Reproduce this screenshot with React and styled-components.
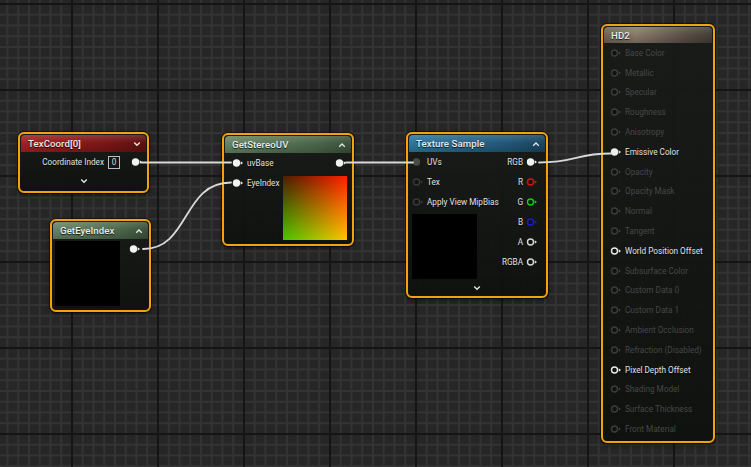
import React from 'react';
import styled, { createGlobalStyle, css } from 'styled-components';

const GlobalStyle = createGlobalStyle`
  html, body {
    margin: 0;
    padding: 0;
    background: #262626;
    font-family: Roboto, "Liberation Sans", sans-serif;
  }
`;

const Canvas = styled.div`
  position: relative;
  width: 751px;
  height: 467px;
  overflow: hidden;
  background-color: #262626;
  background-image:
    linear-gradient(to right, #151515 2px, transparent 2px),
    linear-gradient(to bottom, #151515 2px, transparent 2px),
    linear-gradient(to right, #333333 2px, transparent 2px),
    linear-gradient(to bottom, #333333 2px, transparent 2px);
  background-size: 86px 86px, 86px 86px, 10.75px 10.75px, 10.75px 10.75px;
  background-position: 71px 0, 0 3px, 6.5px 0, 0 3px;
`;

const Wires = styled.svg`
  position: absolute;
  left: 0;
  top: 0;
  width: 751px;
  height: 467px;
  pointer-events: none;
  z-index: 2;
`;

const Node = styled.div`
  position: absolute;
  left: ${p => p.$x}px;
  top: ${p => p.$y}px;
  width: ${p => p.$w}px;
  height: ${p => p.$h}px;
  box-sizing: border-box;
  border: 2px solid #f2a20c;
  border-radius: 6px;
  padding: 1px;
  background: linear-gradient(180deg, rgba(24, 26, 24, 0.93), rgba(14, 16, 14, 0.93));
  box-shadow: 0 0 0 1px rgba(0, 0, 0, 0.5), 0 2px 4px rgba(0, 0, 0, 0.5);
  display: flex;
  flex-direction: column;
  z-index: 1;
`;

const tones = {
  red: css`
    background: linear-gradient(180deg, rgba(255,255,255,0.14), rgba(255,255,255,0) 45%, rgba(0,0,0,0.18)),
      linear-gradient(90deg, #a32222, #7a1616 70%, #5e1010);
  `,
  green: css`
    background: linear-gradient(180deg, rgba(255,255,255,0.14), rgba(255,255,255,0) 45%, rgba(0,0,0,0.18)),
      linear-gradient(90deg, #668563, #4b674b 70%, #3a523a);
  `,
  blue: css`
    background: linear-gradient(180deg, rgba(255,255,255,0.14), rgba(255,255,255,0) 45%, rgba(0,0,0,0.18)),
      linear-gradient(90deg, #2f789f, #22597b 70%, #1a4560);
  `,
  brown: css`
    background: linear-gradient(180deg, rgba(255,255,255,0.12), rgba(255,255,255,0) 45%, rgba(0,0,0,0.2)),
      linear-gradient(90deg, #6f6458, #8a7c6c 30%, #5b5047 75%, #463e37);
  `,
};

const Header = styled.div`
  ${p => tones[p.$tone]}
  height: ${p => p.$h || 17}px;
  flex: none;
  border-radius: 4px 4px 0 0;
  display: flex;
  align-items: center;
  justify-content: space-between;
  padding: 0 5px 0 7px;
  box-sizing: border-box;
`;

const Title = styled.span`
  color: #ececec;
  font-size: 9.6px;
  font-weight: 500;
  letter-spacing: 0.1px;
  text-shadow: 0 1px 1px rgba(0, 0, 0, 0.8);
`;

const Body = styled.div`
  display: flex;
  justify-content: space-between;
  align-items: flex-start;
  padding: 0 ${p => p.$pr ?? 4}px 0 ${p => p.$pl ?? 4}px;
`;

const Column = styled.div`
  display: flex;
  flex-direction: column;
  align-items: ${p => (p.$right ? 'flex-end' : 'flex-start')};
`;

const Row = styled.div`
  display: flex;
  align-items: center;
  justify-content: ${p => (p.$right ? 'flex-end' : 'flex-start')};
  height: ${p => p.$h || 20}px;
  gap: 3px;
`;

const Label = styled.span`
  font-size: 8.2px;
  color: ${p => (p.$dim ? '#474747' : '#e2e2e2')};
  white-space: nowrap;
  text-shadow: ${p => (p.$dim ? 'none' : '0 1px 1px rgba(0,0,0,0.7)')};
`;

const IndexBox = styled.span`
  display: inline-flex;
  align-items: center;
  justify-content: center;
  width: 10px;
  height: 11px;
  border: 1px solid #bdbdbd;
  color: #dcdcdc;
  font-size: 8.2px;
  margin: 0 8px 0 1px;
`;

const Preview = styled.div`
  width: ${p => p.$size}px;
  height: ${p => p.$size}px;
  margin-top: ${p => p.$mt || 0}px;
  background: #000;
  ${p =>
    p.$uv &&
    css`
      background-image: linear-gradient(to bottom, rgb(0, 30, 0), rgb(0, 196, 0)),
        linear-gradient(to right, rgb(72, 0, 0), rgb(255, 0, 0));
      background-blend-mode: screen;
    `}
`;

const Footer = styled.div`
  display: flex;
  justify-content: center;
  align-items: center;
  height: ${p => p.$h || 16}px;
  margin-top: auto;
`;

const Chevron = ({ up }) => (
  <svg width="8" height="6" viewBox="0 0 8 6">
    <polyline
      points={up ? '1.2,4.8 4,2 6.8,4.8' : '1.2,1.5 4,4.3 6.8,1.5'}
      fill="none"
      stroke="#e8e8e8"
      strokeWidth="1.3"
    />
  </svg>
);

const Pin = ({ filled, color = '#f2f2f2', arrow = true }) => (
  <svg width="12" height="10" viewBox="0 0 12 10" style={{ flex: 'none' }}>
    {filled ? (
      <circle cx="4.5" cy="5" r="3.7" fill={color} />
    ) : (
      <circle cx="4.5" cy="5" r="3" fill="#121212" stroke={color} strokeWidth="1.4" />
    )}
    {arrow && <polygon points="8.7,3.2 11,5 8.7,6.8" fill={color} />}
  </svg>
);

const hd2Inputs = [
  ['Base Color'],
  ['Metallic'],
  ['Specular'],
  ['Roughness'],
  ['Anisotropy'],
  ['Emissive Color', 'filled'],
  ['Opacity'],
  ['Opacity Mask'],
  ['Normal'],
  ['Tangent'],
  ['World Position Offset', 'on'],
  ['Subsurface Color'],
  ['Custom Data 0'],
  ['Custom Data 1'],
  ['Ambient Occlusion'],
  ['Refraction (Disabled)'],
  ['Pixel Depth Offset', 'on'],
  ['Shading Model'],
  ['Surface Thickness'],
  ['Front Material'],
];

const sampleOutputs = [
  ['RGB', '#f2f2f2', true],
  ['R', '#e01010'],
  ['G', '#10d010'],
  ['B', '#1a1ae0'],
  ['A', '#d8d8d8'],
  ['RGBA', '#d8d8d8'],
];

export default function App() {
  return (
    <>
      <GlobalStyle />
      <Canvas>
        <Wires viewBox="0 0 751 467">
          <g fill="none" stroke="#d9d9d9" strokeWidth="1.8" strokeLinecap="round">
            <path d="M141 162.5 L231 162.5" />
            <path d="M143 249 C 190 249, 182 182.5, 231 182.5" />
            <path d="M346 162.5 L413 162.5" />
            <path d="M539 162.5 C 577 162.5, 575 153.5, 611 153.5" />
          </g>
        </Wires>

        <Node $x={18} $y={132} $w={131} $h={61}>
          <Header $tone="red">
            <Title>TexCoord[0]</Title>
            <Chevron />
          </Header>
          <Body $pr={3}>
            <span />
            <Row $right>
              <Label>Coordinate Index</Label>
              <IndexBox>0</IndexBox>
              <Pin filled />
            </Row>
          </Body>
          <Footer $h={18}>
            <Chevron />
          </Footer>
        </Node>

        <Node $x={50} $y={219} $w={101} $h={93}>
          <Header $tone="green" $h={17}>
            <Title>GetEyeIndex</Title>
            <Chevron up />
          </Header>
          <Body $pl={2} $pr={7}>
            <Preview $size={65} $mt={2} />
            <Row $right $h={20}>
              <Pin filled />
            </Row>
          </Body>
        </Node>

        <Node $x={222} $y={133} $w={132} $h={113}>
          <Header $tone="green">
            <Title>GetStereoUV</Title>
            <Chevron up />
          </Header>
          <Body $pl={7} $pr={4}>
            <Column>
              <Row>
                <Pin filled />
                <Label>uvBase</Label>
              </Row>
              <Row>
                <Pin filled />
                <Label>EyeIndex</Label>
              </Row>
            </Column>
            <Column $right>
              <Row $right>
                <Pin filled />
              </Row>
              <Preview $size={64} $mt={3} $uv />
            </Column>
          </Body>
        </Node>

        <Node $x={406} $y={132} $w={142} $h={166}>
          <Header $tone="blue">
            <Title>Texture Sample</Title>
            <Chevron up />
          </Header>
          <Body $pl={3} $pr={7}>
            <Column>
              <Row>
                <Pin filled color="#4a4a4a" arrow={false} />
                <Label>UVs</Label>
              </Row>
              <Row>
                <Pin color="#3a3a3a" />
                <Label>Tex</Label>
              </Row>
              <Row>
                <Pin color="#3a3a3a" />
                <Label>Apply View MipBias</Label>
              </Row>
              <Preview $size={65} $mt={2} />
            </Column>
            <Column $right>
              {sampleOutputs.map(([name, color, filled]) => (
                <Row $right key={name}>
                  <Label>{name}</Label>
                  <Pin color={color} filled={filled} />
                </Row>
              ))}
            </Column>
          </Body>
          <Footer $h={15}>
            <Chevron />
          </Footer>
        </Node>

        <Node $x={601} $y={24} $w={114} $h={419}>
          <Header $tone="brown" $h={16}>
            <Title>HD2</Title>
          </Header>
          <Body $pl={6}>
            <Column>
              {hd2Inputs.map(([name, state]) => (
                <Row key={name} $h={19.8}>
                  <Pin
                    filled={state === 'filled'}
                    color={state ? '#ececec' : '#3c3c3c'}
                  />
                  <Label $dim={!state}>{name}</Label>
                </Row>
              ))}
            </Column>
          </Body>
        </Node>
      </Canvas>
    </>
  );
}
